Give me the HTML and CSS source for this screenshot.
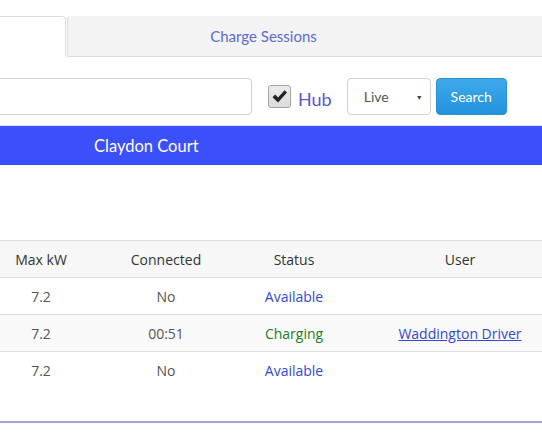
FILE: index.html
```html
<!DOCTYPE html>
<html>
<head>
<meta charset="utf-8">
<link rel="stylesheet" href="styles.css">
</head>
<body>
<div class="page">
  <div class="tabs">
    <div class="tab active"></div>
    <div class="tab inactive"><span class="tab-label">Charge Sessions</span></div>
  </div>
  <div class="search-row">
    <div class="search-input"></div>
    <div class="check">
      <span class="box"><svg width="17" height="15" viewBox="0 0 17 15"><path d="M1.5 8.2 L4.2 5.6 L7 8.6 L13.6 1.2 L16 3.6 L7 13.6 Z" fill="#222"/></svg></span>
      <span class="hub">Hub</span>
    </div>
    <div class="select"><span>Live</span><span class="arrow">▼</span></div>
    <div class="btn">Search</div>
  </div>
  <div class="site-bar"><span>Claydon Court</span></div>
  <table class="grid">
    <colgroup><col class="c1"><col class="c2"><col class="c3"><col class="c4"></colgroup>
    <thead>
      <tr><th>Max kW</th><th>Connected</th><th>Status</th><th>User</th></tr>
    </thead>
    <tbody>
      <tr><td>7.2</td><td>No</td><td class="avail">Available</td><td></td></tr>
      <tr class="stripe"><td>7.2</td><td>00:51</td><td class="charging">Charging</td><td><a class="user" href="#">Waddington Driver</a></td></tr>
      <tr><td>7.2</td><td>No</td><td class="avail">Available</td><td></td></tr>
    </tbody>
  </table>
  <div class="footer-line"></div>
</div>
</body>
</html>
```
FILE: styles.css
```css
html, body {
  margin: 0;
  padding: 0;
  background: #fff;
  overflow: hidden;
}
.page {
  width: 542px;
  height: 442px;
  overflow: hidden;
  font-family: "Lato", "Open Sans", sans-serif;
}
.tabs {
  display: flex;
  margin-top: 16px;
  height: 41px;
}
.tab {
  box-sizing: border-box;
  height: 41px;
  flex: none;
}
.tab.active {
  margin-left: -10px;
  width: 76px;
  background: #fff;
  border-top: 1px solid #ddd;
  border-right: 1px solid #ddd;
  border-radius: 0 4px 0 0;
}
.tab.inactive {
  margin-left: 1px;
  width: 520px;
  background: #f3f3f3;
  border-left: 1px solid #ddd;
  border-bottom: 1px solid #ddd;
  border-radius: 4px 0 0 0;
  padding-right: 128px;
  display: flex;
  align-items: center;
  justify-content: center;
}
.tab-label {
  color: #5d6bd2;
  font-size: 15px;
}
.search-row {
  display: flex;
  align-items: center;
  margin-top: 21px;
  height: 37px;
}
.search-input {
  box-sizing: border-box;
  margin-left: -10px;
  width: 262px;
  height: 37px;
  border: 1px solid #d6d0cc;
  border-radius: 4px;
  flex: none;
}
.check {
  display: flex;
  align-items: center;
  margin-left: 16px;
}
.box {
  box-sizing: border-box;
  width: 23px;
  height: 23px;
  border: 1px solid #a5a5a5;
  border-radius: 3px;
  background: linear-gradient(#ececec, #dcdcdc);
  display: flex;
  align-items: center;
  justify-content: center;
}
.hub {
  margin-left: 7px;
  color: #5558d6;
  font-size: 18px;
  margin-top: 4px;
}
.select {
  box-sizing: border-box;
  margin-left: 15px;
  width: 84px;
  height: 37px;
  border: 1px solid #d6d0cc;
  border-radius: 4px;
  display: flex;
  align-items: center;
  justify-content: space-between;
  padding: 0 7px 0 16px;
  color: #555;
  font-size: 14px;
}
.arrow {
  font-size: 7px;
  color: #444;
}
.btn {
  box-sizing: border-box;
  margin-left: 5px;
  width: 71px;
  height: 37px;
  border-radius: 4px;
  background: linear-gradient(#3eaaeb, #2392dd);
  border: 1px solid #2a8fd4;
  color: #fff;
  font-size: 14px;
  display: flex;
  align-items: center;
  justify-content: center;
}
.site-bar {
  margin-top: 10px;
  border-top: 1px solid #e2e2e8;
  height: 39px;
  background: #3b50fb;
  color: #fff;
  font-size: 16.5px;
  display: flex;
  align-items: center;
  padding-left: 94px;
}
.grid {
  margin-top: 75px;
  margin-left: -30px;
  width: 582px;
  table-layout: fixed;
  border-collapse: collapse;
  font-family: "Open Sans", sans-serif;
  font-size: 14px;
}
.c1 { width: 142px; }
.c2 { width: 108px; }
.c3 { width: 148px; }
.c4 { width: 184px; }
.grid th {
  height: 36px;
  padding: 0;
  font-weight: 400;
  color: #333;
  background: #f7f7f7;
  border-top: 1px solid #ddd;
  border-bottom: 1px solid #ddd;
  text-align: center;
}
.grid td {
  height: 36px;
  padding: 0;
  color: #555;
  text-align: center;
}
.grid tr.stripe td {
  background: #f9f9f9;
  border-top: 1px solid #ddd;
  border-bottom: 1px solid #ddd;
}
.grid td.avail {
  color: #3548d4;
}
.grid td.charging {
  color: #1f7d1f;
}
.user {
  color: #3548d4;
  text-decoration: underline;
}
.footer-line {
  margin-top: 33px;
  height: 2px;
  background: #a0a5d6;
}
```
